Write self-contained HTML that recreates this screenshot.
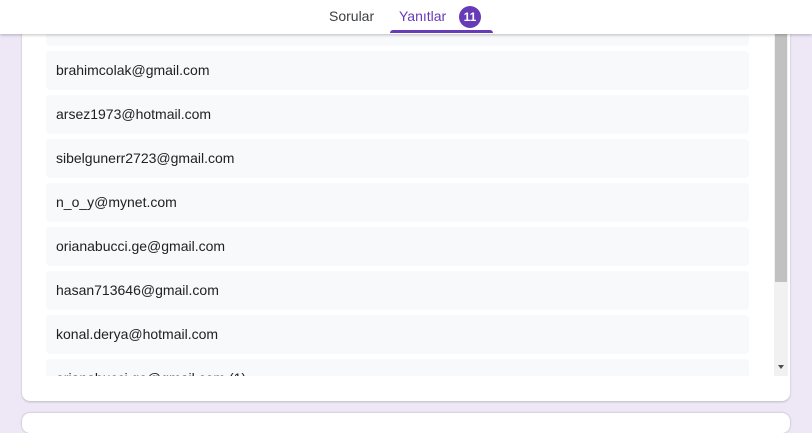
<!DOCTYPE html><html><head><style>
body{margin:0;width:812px;height:417px;background:#ede7f6;font-family:"Liberation Sans",Roboto,sans-serif;position:relative;overflow:hidden}
.hdr{position:absolute;left:0;top:0;width:812px;height:34px;background:#fff;box-shadow:0 1px 3px rgba(0,0,0,.25);z-index:5}
.tab{position:absolute;top:8px;font-size:14px}
.card{position:absolute;left:22px;top:-10px;width:768px;height:411px;background:#fff;border-radius:8px;box-shadow:0 1px 2px rgba(0,0,0,.2)}
.card2{position:absolute;left:22px;top:413px;width:768px;height:20px;background:#fff;border-radius:8px;box-shadow:0 0 2px rgba(0,0,0,.25)}
.list{position:absolute;left:46px;top:34px;width:703px;height:342px;overflow:hidden}
.row{position:absolute;left:0;width:703px;height:39px;background:#f8f9fa;border-radius:4px;font-size:14px;color:#202124;line-height:39px;text-indent:10px}
.sb{position:absolute;left:774px;top:34px;width:14px;height:342px;background:#f1f1f1}
.th{position:absolute;left:1px;top:0;width:12px;height:248px;background:#c1c1c1}
</style></head><body>
<div class="card"></div><div class="card2"></div>
<div class="list">
<div class="row" style="top:-27px"></div>
<div class="row" style="top:17px">brahimcolak@gmail.com</div>
<div class="row" style="top:61px">arsez1973@hotmail.com</div>
<div class="row" style="top:105px">sibelgunerr2723@gmail.com</div>
<div class="row" style="top:149px">n_o_y@mynet.com</div>
<div class="row" style="top:193px">orianabucci.ge@gmail.com</div>
<div class="row" style="top:237px">hasan713646@gmail.com</div>
<div class="row" style="top:281px">konal.derya@hotmail.com</div>
<div class="row" style="top:325px">orianabucci.ge@gmail.com (1)</div>
</div>
<div class="sb"><div class="th"></div><div style="position:absolute;left:4px;top:331px;width:0;height:0;border-left:3px solid transparent;border-right:3px solid transparent;border-top:4px solid #505050"></div></div>
<div class="hdr">
<span class="tab" style="left:329px;color:#3c4043">Sorular</span>
<span class="tab" style="left:399px;color:#673ab7">Yanıtlar</span>
<span style="position:absolute;left:459px;top:6px;width:22px;height:22px;border-radius:11px;background:#673ab7;color:#fff;font-size:12px;font-weight:bold;text-align:center;line-height:22px">11</span>
<div style="position:absolute;left:390px;top:30px;width:103px;height:3px;background:#673ab7;border-radius:3px 3px 0 0"></div>
</div>
</body></html>
